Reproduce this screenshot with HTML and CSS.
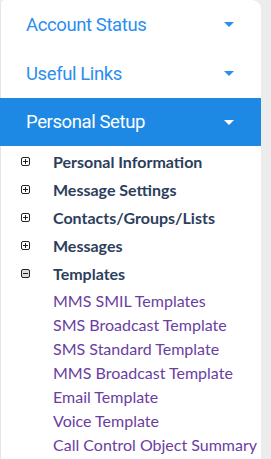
FILE: index.html
```html
<!DOCTYPE html>
<html lang="en">

<head>
    <meta charset="UTF-8">
    <meta name="viewport" content="width=device-width, initial-scale=1.0">
    <title>Menu</title>
    <link rel="stylesheet" href="styles.css">
</head>

<body>
    <div class="sidebar">
        <div class="section">
            <span>Account Status</span>
            <span class="caret"></span>
        </div>
        <div class="section">
            <span>Useful Links</span>
            <span class="caret"></span>
        </div>
        <div class="section active">
            <span>Personal Setup</span>
            <span class="caret"></span>
        </div>

        <ul class="tree">
            <li class="node"><span class="toggle plus"></span>Personal Information</li>
            <li class="node"><span class="toggle plus"></span>Message Settings</li>
            <li class="node"><span class="toggle plus"></span>Contacts/Groups/Lists</li>
            <li class="node"><span class="toggle plus"></span>Messages</li>
            <li class="node"><span class="toggle minus"></span>Templates</li>
        </ul>

        <ul class="links">
            <li><a href="#">MMS SMIL Templates</a></li>
            <li><a href="#">SMS Broadcast Template</a></li>
            <li><a href="#">SMS Standard Template</a></li>
            <li><a href="#">MMS Broadcast Template</a></li>
            <li><a href="#">Email Template</a></li>
            <li><a href="#">Voice Template</a></li>
            <li><a href="#">Call Control Object Summary</a></li>
        </ul>
    </div>
</body>

</html>
```

FILE: styles.css
```css
body {
    margin: 0;
    background-color: #ececec;
    font-family: Lato, "Liberation Sans", sans-serif;
    overflow: hidden;
}

.sidebar {
    width: 261px;
    height: 470px;
    background-color: #fff;
    border-radius: 4px 9px 0 0;
    box-shadow: inset 1px 0 0 #e6e6e6;
}

.section {
    display: flex;
    align-items: center;
    justify-content: space-between;
    height: 49px;
    padding: 0 27px 0 26px;
    font-family: Roboto, sans-serif;
    font-size: 18.5px;
    letter-spacing: -0.4px;
    color: #2b8ef0;
}

.section.active {
    height: 48px;
    background-color: #1e88e5;
    color: #fff;
}

.caret {
    width: 0;
    height: 0;
    border-left: 5px solid transparent;
    border-right: 5px solid transparent;
    border-top: 5px solid currentColor;
}

.tree,
.links {
    list-style: none;
    margin: 0;
    padding: 0;
}

.tree {
    padding-top: 1px;
}

.node {
    display: flex;
    align-items: center;
    height: 28px;
    padding-left: 21px;
    font-size: 16px;
    font-weight: bold;
    color: #2c3e5c;
}

.toggle {
    position: relative;
    box-sizing: border-box;
    width: 9px;
    height: 9px;
    margin-right: 23px;
    border: 1px solid #222;
    border-radius: 2px;
}

.toggle::before,
.toggle::after {
    content: "";
    position: absolute;
    background-color: #222;
}

.toggle::before {
    left: 1px;
    top: 3px;
    width: 5px;
    height: 1px;
}

.plus::after {
    left: 3px;
    top: 1px;
    width: 1px;
    height: 5px;
}

.minus {
    background-color: #ddd;
}

.links {
    padding-top: 2px;
}

.links li {
    height: 24px;
    line-height: 24px;
    padding-left: 53px;
    font-size: 16px;
}

.links a {
    color: #6a3ea1;
    text-decoration: none;
}
```
